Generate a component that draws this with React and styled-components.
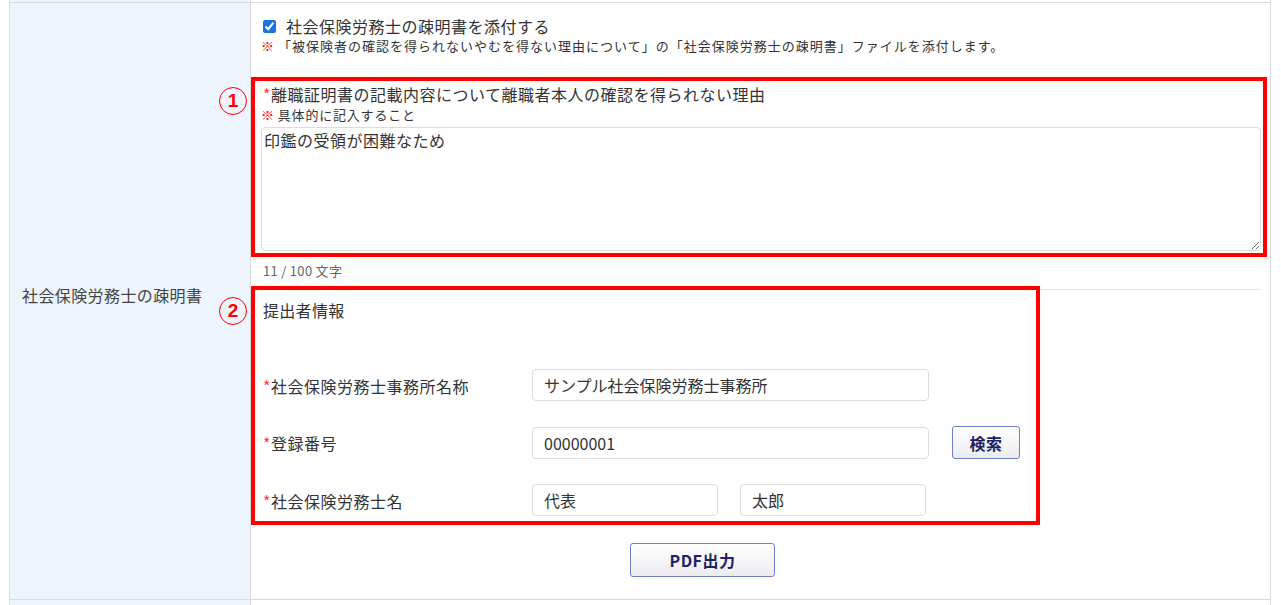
import React from "react";
import styled, { createGlobalStyle } from "styled-components";

const GlobalStyle = createGlobalStyle`
  html, body {
    margin: 0;
    padding: 0;
    background: #fff;
    font-family: "Noto Sans CJK JP", "Noto Sans", sans-serif;
    color: #333;
  }
`;

const Page = styled.div`
  padding: 0 10px 0 9px;
  overflow: hidden;
  height: 605px;
`;

const Table = styled.div`
  display: grid;
  grid-template-columns: 241px 1fr;
  border-left: 1px solid #d8dce2;
  border-right: 1px solid #d8dce2;
  margin-top: -20px;
`;

const LabelCell = styled.div`
  background: #edf4fc;
  border-bottom: 1px solid #d8dce2;
  border-right: 1px solid #d8dce2;
  display: flex;
  align-items: center;
  padding: 0 12px 13px;
  font-size: 16px;
  letter-spacing: 0.4px;
  color: #444;
`;

const FillerLabel = styled.div`
  background: #edf4fc;
  border-bottom: 1px solid #d8dce2;
  border-right: 1px solid #d8dce2;
  height: ${(p) => p.$h}px;
`;

const FillerContent = styled.div`
  border-bottom: 1px solid #d8dce2;
  height: ${(p) => p.$h}px;
`;

const ContentCell = styled.div`
  border-bottom: 1px solid #d8dce2;
  padding: 0 3px 0 0;
`;

const CheckRow = styled.label`
  display: flex;
  align-items: center;
  gap: 10px;
  padding: 12px 0 0 12px;
  font-size: 16px;
  letter-spacing: 0.5px;
  line-height: 22px;
`;

const CheckBox = styled.input`
  width: 13px;
  height: 13px;
  margin: 0;
  accent-color: #1a73e8;
`;

const Note = styled.div`
  font-size: 13px;
  letter-spacing: ${(p) => p.$ls || 0.3}px;
  line-height: 18px;
  color: #333;
  padding-left: ${(p) => p.$pl || 0}px;
  margin-top: ${(p) => p.$mt || 0}px;
`;

const Mark = styled.span`
  color: #ff0000;
  font-weight: bold;
  margin-right: 3px;
`;

const RedBox = styled.div`
  position: relative;
  border: 4px solid #ff0000;
  width: ${(p) => p.$w || "auto"};
  box-sizing: border-box;
`;

const Badge = styled.span`
  position: absolute;
  left: -36px;
  top: ${(p) => p.$top}px;
  width: 26px;
  height: 26px;
  border: 1.5px solid #ff0000;
  border-radius: 50%;
  color: #ff0000;
  font: bold 19px/26px "Liberation Sans", Arial, sans-serif;
  text-align: center;
  box-sizing: content-box;
`;

const ReasonBox = styled(RedBox)`
  margin-top: 22px;
  padding: 3px 2px 2px 6px;
`;

const Title = styled.div`
  font-size: 16px;
  letter-spacing: 0.5px;
  line-height: 20px;
  padding-left: 2px;
`;

const Req = styled.span`
  color: #ff3b3b;
`;

const TextArea = styled.textarea`
  display: block;
  width: 100%;
  height: 124px;
  margin-top: 3px;
  box-sizing: border-box;
  border: 1px solid #dcdcdc;
  border-radius: 4px;
  padding: 1px 2px;
  font: 16px/22px "Noto Sans CJK JP", sans-serif;
  letter-spacing: 0.5px;
  color: #333;
  resize: vertical;
  outline: none;
`;

const Counter = styled.div`
  font-size: 13px;
  letter-spacing: 0.3px;
  color: #666;
  padding: 5px 0 0 12px;
  line-height: 18px;
`;

const SubmitterArea = styled.div`
  margin-top: 9px;
  border-top: 1px solid #e6e6e6;
  margin-right: 6px;
`;

const SubmitterBox = styled(RedBox)`
  margin-top: -4px;
  padding: 10px 8px 5px 8px;
`;

const SectionTitle = styled.div`
  font-size: 16px;
  letter-spacing: 0.3px;
  line-height: 20px;
  margin-bottom: 49px;
`;

const FormGrid = styled.div`
  display: grid;
  grid-template-columns: 269px auto;
  row-gap: 25px;
  align-items: center;
`;

const FieldLabel = styled.div`
  font-size: 16px;
  letter-spacing: 0.5px;
  line-height: 20px;
  padding-top: 1px;
`;

const FieldGroup = styled.div`
  display: flex;
  align-items: center;
  gap: ${(p) => p.$gap || 22}px;
`;

const TextInput = styled.input`
  width: ${(p) => p.$w}px;
  height: 32px;
  box-sizing: border-box;
  border: 1px solid #dedede;
  border-radius: 4px;
  padding: 0 11px;
  font: 16px "Noto Sans CJK JP", sans-serif;
  color: #333;
  outline: none;
`;

const NavyButton = styled.button`
  width: ${(p) => p.$w}px;
  height: ${(p) => p.$h}px;
  border: 1px solid #6d80c8;
  border-radius: 3px;
  background: linear-gradient(#ffffff, #ececf0);
  color: #1c2266;
  font: bold 16px "Noto Sans CJK JP", sans-serif;
  letter-spacing: 0.5px;
  padding: 0;
  cursor: pointer;
`;

const ButtonRow = styled.div`
  padding: 18px 0 22px 379px;
`;

export default function App() {
  return (
    <Page>
      <GlobalStyle />
      <Table>
        <FillerLabel $h={22} />
        <FillerContent $h={22} />
        <LabelCell>社会保険労務士の疎明書</LabelCell>
        <ContentCell>
          <CheckRow>
            <CheckBox type="checkbox" defaultChecked />
            社会保険労務士の疎明書を添付する
          </CheckRow>
          <Note $pl={10} $ls={1}>
            <Mark>※</Mark>「被保険者の確認を得られないやむを得ない理由について」の「社会保険労務士の疎明書」ファイルを添付します。
          </Note>
          <ReasonBox>
            <Badge $top={6}>1</Badge>
            <Title>
              <Req>*</Req>離職証明書の記載内容について離職者本人の確認を得られない理由
            </Title>
            <Note $mt={2} $ls={0.8}>
              <Mark>※</Mark>具体的に記入すること
            </Note>
            <TextArea defaultValue="印鑑の受領が困難なため" />
          </ReasonBox>
          <Counter>11 / 100 文字</Counter>
          <SubmitterArea>
            <SubmitterBox $w="789px">
              <Badge $top={7}>2</Badge>
              <SectionTitle>提出者情報</SectionTitle>
              <FormGrid>
                <FieldLabel>
                  <Req>*</Req>社会保険労務士事務所名称
                </FieldLabel>
                <FieldGroup>
                  <TextInput $w={397} defaultValue="サンプル社会保険労務士事務所" />
                </FieldGroup>
                <FieldLabel>
                  <Req>*</Req>登録番号
                </FieldLabel>
                <FieldGroup $gap={23}>
                  <TextInput $w={397} defaultValue="00000001" />
                  <NavyButton $w={68} $h={33}>検索</NavyButton>
                </FieldGroup>
                <FieldLabel>
                  <Req>*</Req>社会保険労務士名
                </FieldLabel>
                <FieldGroup>
                  <TextInput $w={186} defaultValue="代表" />
                  <TextInput $w={186} defaultValue="太郎" />
                </FieldGroup>
              </FormGrid>
            </SubmitterBox>
          </SubmitterArea>
          <ButtonRow>
            <NavyButton $w={145} $h={34}>PDF出力</NavyButton>
          </ButtonRow>
        </ContentCell>
        <FillerLabel $h={40} />
        <FillerContent $h={40} />
      </Table>
    </Page>
  );
}
